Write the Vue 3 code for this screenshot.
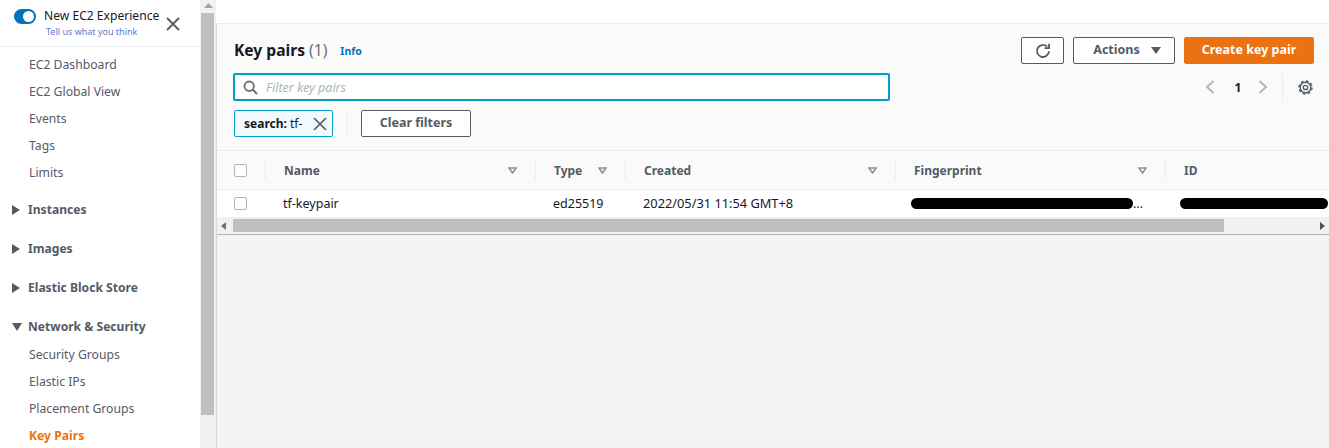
<script setup>
const topItems = ['EC2 Dashboard', 'EC2 Global View', 'Events', 'Tags', 'Limits']
const sections = ['Instances', 'Images', 'Elastic Block Store']
const netItems = ['Security Groups', 'Elastic IPs', 'Placement Groups']
</script>

<template>
  <div class="page">
    <aside class="side">
      <div class="side-head">
        <span class="toggle"><span class="knob"></span></span>
        <div class="exp">
          <div class="exp-title">New EC2 Experience</div>
          <div class="exp-link">Tell us what you think</div>
        </div>
        <svg class="close" width="14" height="14" viewBox="0 0 14 14"><path d="M1 1l12 12M13 1L1 13" stroke="#545b64" stroke-width="1.8" fill="none"/></svg>
      </div>
      <nav class="nav">
        <div class="group">
          <div v-for="i in topItems" :key="i" class="item">{{ i }}</div>
        </div>
        <div v-for="s in sections" :key="s" class="section">
          <svg width="8" height="10" viewBox="0 0 8 10"><path d="M0 0l8 5-8 5z" fill="#545b64"/></svg>
          <span>{{ s }}</span>
        </div>
        <div class="section open">
          <svg width="10" height="8" viewBox="0 0 10 8"><path d="M0 0h10L5 8z" fill="#545b64"/></svg>
          <span>Network &amp; Security</span>
        </div>
        <div v-for="i in netItems" :key="i" class="item">{{ i }}</div>
        <div class="item active">Key Pairs</div>
      </nav>
    </aside>

    <div class="vbar">
      <svg class="vup" width="9" height="5" viewBox="0 0 9 5"><path d="M4.5 0L9 5H0z" fill="#a3a3a3"/></svg>
      <div class="vthumb"></div>
    </div>

    <main class="main">
      <div class="topband"></div>
      <div class="content">
      <section class="panel">
        <div class="panel-top">
          <div class="left">
            <div class="title-row">
              <h1 class="title">Key pairs <span class="count">(1)</span></h1>
              <span class="info">Info</span>
            </div>
            <div class="search">
              <svg width="15" height="15" viewBox="0 0 15 15"><circle cx="6.2" cy="6.2" r="4.7" stroke="#687078" stroke-width="1.8" fill="none"/><path d="M9.8 9.8l4.2 4.2" stroke="#687078" stroke-width="2" fill="none"/></svg>
              <span class="placeholder">Filter key pairs</span>
            </div>
            <div class="tokens">
              <div class="token">
                <span><b>search:</b> tf-</span>
                <svg width="14" height="14" viewBox="0 0 14 14"><path d="M1 1l12 12M13 1L1 13" stroke="#545b64" stroke-width="1.7" fill="none"/></svg>
              </div>
              <span class="tok-div"></span>
              <button class="btn clear"><span class="lbl">Clear filters</span></button>
            </div>
          </div>
          <div class="right">
            <div class="actions">
              <button class="btn refresh">
                <svg width="16" height="16" viewBox="0 0 16 16"><path d="M14 8.2a6 6 0 1 1-1.9-4.6" stroke="#545b64" stroke-width="1.8" fill="none"/><path d="M14 .8v4.4H9.6" stroke="#545b64" stroke-width="1.8" fill="none"/></svg>
              </button>
              <button class="btn act">
                <span class="lbl">Actions</span>
                <svg width="10" height="7" viewBox="0 0 10 7"><path d="M0 0h10L5 7z" fill="#545b64"/></svg>
              </button>
              <button class="btn create"><span class="lbl">Create key pair</span></button>
            </div>
            <div class="pager">
              <svg class="pprev" width="10" height="14" viewBox="0 0 10 14"><path d="M8.5 1L2 7l6.5 6" stroke="#aab7b8" stroke-width="1.8" fill="none"/></svg>
              <span class="pnum">1</span>
              <svg width="10" height="14" viewBox="0 0 10 14"><path d="M1.5 1L8 7l-6.5 6" stroke="#aab7b8" stroke-width="1.8" fill="none"/></svg>
              <span class="pdiv"></span>
              <svg class="gear" width="15" height="15" viewBox="0 0 16 16"><circle cx="8" cy="8" r="5.6" stroke="#545b64" stroke-width="1.5" fill="none"/><circle cx="8" cy="8" r="7" stroke="#545b64" stroke-width="1.5" stroke-dasharray="3.1 2.4" fill="none"/><circle cx="8" cy="8" r="2.3" stroke="#545b64" stroke-width="1.5" fill="none"/></svg>
            </div>
          </div>
        </div>

        <div class="table">
          <div class="row head">
            <div class="cell chk"><span class="box"></span></div>
            <div class="cell th"><span>Name</span><svg class="caret" width="9" height="7" viewBox="0 0 9 7"><path d="M1 1h7L4.5 6z" fill="none" stroke="#879596" stroke-width="1.6"/></svg></div>
            <div class="cell th"><span>Type</span><svg class="caret" width="9" height="7" viewBox="0 0 9 7"><path d="M1 1h7L4.5 6z" fill="none" stroke="#879596" stroke-width="1.6"/></svg></div>
            <div class="cell th"><span>Created</span><svg class="caret" width="9" height="7" viewBox="0 0 9 7"><path d="M1 1h7L4.5 6z" fill="none" stroke="#879596" stroke-width="1.6"/></svg></div>
            <div class="cell th"><span>Fingerprint</span><svg class="caret" width="9" height="7" viewBox="0 0 9 7"><path d="M1 1h7L4.5 6z" fill="none" stroke="#879596" stroke-width="1.6"/></svg></div>
            <div class="cell th last"><span>ID</span></div>
          </div>
          <div class="row body">
            <div class="cell chk"><span class="box"></span></div>
            <div class="cell td">tf-keypair</div>
            <div class="cell td">ed25519</div>
            <div class="cell td created">2022/05/31 11:54 GMT+8</div>
            <div class="cell td redacted"><span class="dots">...</span><i class="pill pill-fp"></i></div>
            <div class="cell td redacted"><i class="pill pill-id"></i></div>
          </div>
        </div>

        <div class="hbar">
          <svg width="5" height="8" viewBox="0 0 5 8"><path d="M5 0v8L0 4z" fill="#707070"/></svg>
          <div class="hthumb"></div>
          <svg class="hright" width="5" height="8" viewBox="0 0 5 8"><path d="M0 0v8l5-4z" fill="#505050"/></svg>
        </div>
      </section>
      </div>
    </main>
  </div>
</template>

<style>
html, body { margin: 0; overflow: hidden; background: #fff; }
</style>

<style scoped>
.page {
  display: flex; width: 1329px; height: 448px; overflow: hidden;
  font-family: "Noto Sans", "Open Sans", sans-serif; font-size: 12.5px; color: #16191f; background: #fff;
}
.side { width: 200px; flex: none; color: #545b64; }
.side-head {
  height: 47px; box-sizing: border-box; border-bottom: 1px solid #eaeded;
  display: flex; align-items: flex-start; padding: 9px 0 0 14px; position: relative;
}
.toggle { width: 22px; height: 15px; border-radius: 8px; background: #0073bb; position: relative; flex: none; }
.knob { position: absolute; right: 2px; top: 2px; width: 11px; height: 11px; border-radius: 50%; background: #fff; }
.exp { margin-left: 8px; width: 122px; }
.exp-title { font-size: 12.1px; line-height: 14px; color: #16191f; white-space: nowrap; }
.exp-link { font-size: 9px; line-height: 12px; margin: 3px 0 0 2px; color: #5f78d0; white-space: nowrap; }
.close { margin-top: 8px; flex: none; }
.nav { padding-top: 4px; font-size: 12.2px; }
.group { margin-bottom: 10px; }
.item { height: 27px; line-height: 27px; padding-left: 29px; color: #545b64; white-space: nowrap; }
.item.active { color: #ec7211; font-weight: 700; }
.section {
  height: 27px; margin-bottom: 12px; display: flex; align-items: center; font-size: 12.1px;
  color: #545b64; font-weight: 700; white-space: nowrap;
}
.section svg { margin-left: 12px; margin-right: 8px; flex: none; }
.section.open { margin-bottom: 1px; }
.section.open svg { margin-right: 6px; }

.vbar { width: 16px; flex: none; background: #f1f1f1; position: relative; }
.vup { display: block; margin: 3px auto 5px; }
.vthumb { width: 13px; height: 402px; margin-left: 1px; background: #bfbfbf; }

.main { flex: 1; min-width: 0; display: flex; flex-direction: column; background: #fff; }
.topband { height: 23px; flex: none; background: #fff; }
.content { flex: 1; border-left: 1px solid #d5dbdb; border-top: 1px solid #eaeded; background: #f2f3f3; }
.panel { background: #fafafa; }
.panel-top {
  display: flex; justify-content: space-between; height: 127px; box-sizing: border-box;
  padding: 13px 15px 0 16px; border-bottom: 1px solid #eaeded;
}
.left { width: 657px; }
.title-row { height: 27px; display: flex; align-items: center; padding: 0 0 1px 1px; box-sizing: border-box; }
.title { margin: 0; font-size: 15.6px; font-weight: 700; color: #16191f; }
.count { font-weight: 400; color: #687078; }
.info { margin-left: 13px; margin-top: 2px; font-size: 10.5px; font-weight: 700; color: #0073bb; }
.search {
  margin-top: 9px; height: 28px; box-sizing: border-box; border: 2px solid #00a1c9; border-radius: 2px;
  background: #fff; display: flex; align-items: center; padding-left: 8px; gap: 8px;
}
.placeholder { font-style: italic; color: #aab7b8; font-size: 12.5px; }
.tokens { margin-top: 9px; height: 27px; display: flex; align-items: center; padding-left: 1px; }
.token {
  width: 99px; height: 27px; box-sizing: border-box; border: 1px solid #00a1c9; border-radius: 2px;
  background: #f1faff; display: flex; align-items: center; justify-content: space-between;
  padding: 0 5px 0 9px; font-size: 12px; white-space: nowrap;
}
.tok-div { width: 1px; height: 27px; background: #eaeded; margin: 0 13px 0 14px; }
.btn {
  font-family: inherit; box-sizing: border-box; height: 27px; border: 1px solid #545b64; border-radius: 2px;
  background: #fff; color: #545b64; font-size: 12.5px; font-weight: 700; padding: 0;
  display: flex; align-items: center; justify-content: center; white-space: nowrap;
}
.lbl { margin-top: -2px; }
.clear { width: 110px; }
.right { display: flex; flex-direction: column; align-items: flex-end; }
.actions { display: flex; gap: 9px; }
.refresh { width: 43px; }
.act { width: 102px; gap: 11px; padding-left: 6px; }
.create { width: 130px; background: #ec7211; border-color: #ec7211; color: #fff; }
.pager { display: flex; align-items: center; margin-top: 9px; height: 28px; }
.pprev { margin-right: 17px; }
.pnum { font-weight: 700; font-size: 12px; width: 12px; text-align: center; margin-right: 14px; }
.pdiv { width: 1px; height: 27px; background: #eaeded; margin: 0 15px 0 14px; }
.gear { margin-right: 1px; }

.table { overflow: hidden; }
.row { display: grid; grid-template-columns: 49px 270px 90px 270px 270px 163px; }
.row.head { height: 39px; box-sizing: border-box; border-bottom: 1px solid #eaeded; align-items: center; }
.row.body { height: 27px; background: #fff; align-items: center; }
.cell { box-sizing: border-box; min-width: 0; }
.chk { padding-left: 17px; display: flex; align-items: center; height: 19px; }
.head .chk { border-right: 1px solid #eaeded; height: 19px; }
.box { width: 11px; height: 11px; border: 1px solid #aab7b8; border-radius: 2px; background: #fff; }
.th {
  display: flex; align-items: center; justify-content: space-between; height: 19px;
  padding: 0 18px 0 18px; border-right: 1px solid #eaeded; font-weight: 700; color: #545b64; font-size: 12px;
}
.th.last { border-right: 0; }
.td { padding-left: 17px; white-space: nowrap; font-size: 12.5px; line-height: 18px; color: #16191f; }
.td.created { font-size: 12.8px; margin-top: -1px; }
.redacted { position: relative; height: 27px; line-height: 27px; }
.dots { margin-left: 220px; }
.pill { position: absolute; top: 8px; height: 11px; background: #000; border-radius: 6px; }
.pill-fp { left: 15px; width: 222px; }
.pill-id { left: 14px; width: 148px; }

.hbar {
  height: 18px; box-sizing: border-box; background: #f1f1f1; border-bottom: 1px solid #aab7b8;
  display: flex; align-items: center; padding: 0 4px; position: relative;
}
.hbar svg:first-child { flex: none; }
.hthumb { width: 991px; height: 13px; margin-left: 7px; background: #bfbfbf; }
.hright { margin-left: auto; }
</style>
